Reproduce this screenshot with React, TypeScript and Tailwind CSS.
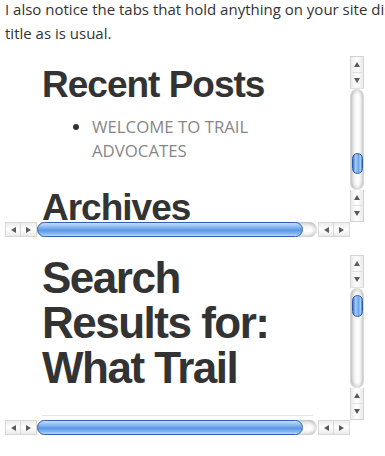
import React from "react";

const heading = "font-['Liberation_Sans',Arial,sans-serif] font-bold text-[#333]";

function Arrow({ dir }: { dir: "up" | "down" | "left" | "right" }) {
	const points: Record<string, string> = {
		up: "3,0 6,5 0,5",
		down: "0,0 6,0 3,5",
		left: "0,3 5,0 5,6",
		right: "0,0 5,3 0,6",
	};
	const vertical = dir === "up" || dir === "down";
	return (
		<svg width={vertical ? 6 : 5} height={vertical ? 5 : 6} viewBox={vertical ? "0 0 6 5" : "0 0 5 6"}>
			<polygon points={points[dir]} fill="#5a5a5a" />
		</svg>
	);
}

function VButton({ dir, last }: { dir: "up" | "down"; last?: boolean }) {
	return (
		<div
			className={`flex h-[16px] items-center justify-center border-x border-[#d4d4d4] bg-[linear-gradient(to_right,#ececec,#ffffff_50%,#e9e9e9)] ${
				last ? "border-b" : "border-b border-b-[#e2e2e2]"
			}`}
		>
			<Arrow dir={dir} />
		</div>
	);
}

function HButton({ dir }: { dir: "left" | "right" }) {
	return (
		<div className="flex w-[16px] items-center justify-center border-y border-r border-[#d8d8d8] bg-[linear-gradient(to_bottom,#ececec,#ffffff_50%,#e9e9e9)]">
			<Arrow dir={dir} />
		</div>
	);
}

function VScrollbar({ thumbTop, thumbHeight }: { thumbTop: number; thumbHeight: number }) {
	return (
		<div className="flex h-full flex-col border-t border-[#d4d4d4]">
			<VButton dir="up" />
			<VButton dir="down" />
			<div className="flex flex-1 flex-col items-center rounded-full border-x border-[#d8d8d8] bg-[linear-gradient(to_right,#d6d6d6,#f6f6f6_35%,#ffffff_60%,#e2e2e2)] shadow-[inset_0_3px_3px_rgba(0,0,0,0.12),inset_0_-3px_3px_rgba(0,0,0,0.12)]">
				<div
					className="w-[11px] rounded-full border border-[#2e5bb0] bg-[linear-gradient(to_right,#3d72d2,#a9d0f8_30%,#6ba3ea_60%,#a7cff7_85%,#3f74d0)]"
					style={{ marginTop: thumbTop, height: thumbHeight }}
				/>
			</div>
			<VButton dir="up" />
			<VButton dir="down" last />
		</div>
	);
}

function HScrollbar() {
	return (
		<div className="flex h-full">
			<div className="flex w-[16px] items-center justify-center border border-[#d8d8d8] bg-[linear-gradient(to_bottom,#ececec,#ffffff_50%,#e9e9e9)]">
				<Arrow dir="left" />
			</div>
			<HButton dir="right" />
			<div className="flex flex-1 items-center rounded-full bg-[linear-gradient(to_bottom,#d8d8d8,#f7f7f7_35%,#ffffff_60%,#e2e2e2)] shadow-[inset_3px_0_3px_rgba(0,0,0,0.1),inset_-3px_0_3px_rgba(0,0,0,0.12)]">
				<div className="h-full w-[266px] rounded-full border border-[#3660b2] bg-[linear-gradient(to_bottom,#c4ddf9,#8dbcf2_30%,#5b96e5_55%,#7eb5f0_80%,#b7d8f8)]" />
			</div>
			<div className="ml-[1px] flex w-[16px] items-center justify-center border border-[#d8d8d8] bg-[linear-gradient(to_bottom,#ececec,#ffffff_50%,#e9e9e9)]">
				<Arrow dir="left" />
			</div>
			<HButton dir="right" />
		</div>
	);
}

function ScrollBox({
	height,
	thumbTop,
	thumbHeight,
	children,
}: {
	height: number;
	thumbTop: number;
	thumbHeight: number;
	children: React.ReactNode;
}) {
	return (
		<div className="ml-[5px] grid w-[359px] grid-cols-[345px_14px]" style={{ gridTemplateRows: `${height}px 15px` }}>
			<div className="overflow-hidden pl-[37px] pr-[40px]">{children}</div>
			<VScrollbar thumbTop={thumbTop} thumbHeight={thumbHeight} />
			<HScrollbar />
			<div />
		</div>
	);
}

export default function App() {
	return (
		<div className="h-[456px] w-[385px] overflow-hidden bg-white">
			<p className="mt-[-3px] whitespace-nowrap pl-[5px] font-['Open_Sans',sans-serif] text-[15px] leading-[24px] text-[#333]">
				I also notice the tabs that hold anything on your site display the page
				<br />
				title as is usual.
			</p>

			<div className="mt-[11px]">
				<ScrollBox height={166} thumbTop={64} thumbHeight={21}>
					<h2 className={`${heading} mt-[10px] text-[37px] leading-[37px] tracking-[-1px]`}>Recent Posts</h2>
					<ul className="mt-[12px] list-disc pl-[50px] font-['Open_Sans',sans-serif] text-[16.8px] leading-[24px] text-[#878787] marker:text-[#333]">
						<li>WELCOME TO TRAIL ADVOCATES</li>
					</ul>
					<h2 className={`${heading} mt-[26px] text-[37px] leading-[37px] tracking-[-1px]`}>Archives</h2>
				</ScrollBox>
			</div>

			<div className="mt-[18px]">
				<ScrollBox height={165} thumbTop={7} thumbHeight={22}>
					<h1 className={`${heading} text-[44px] leading-[45px] tracking-[-1.5px]`}>
						Search
						<br />
						Results for:
						<br />
						What Trail
					</h1>
					<hr className="mt-[25px] w-[271px] border-t border-[#e6e6e6]" />
				</ScrollBox>
			</div>
		</div>
	);
}
